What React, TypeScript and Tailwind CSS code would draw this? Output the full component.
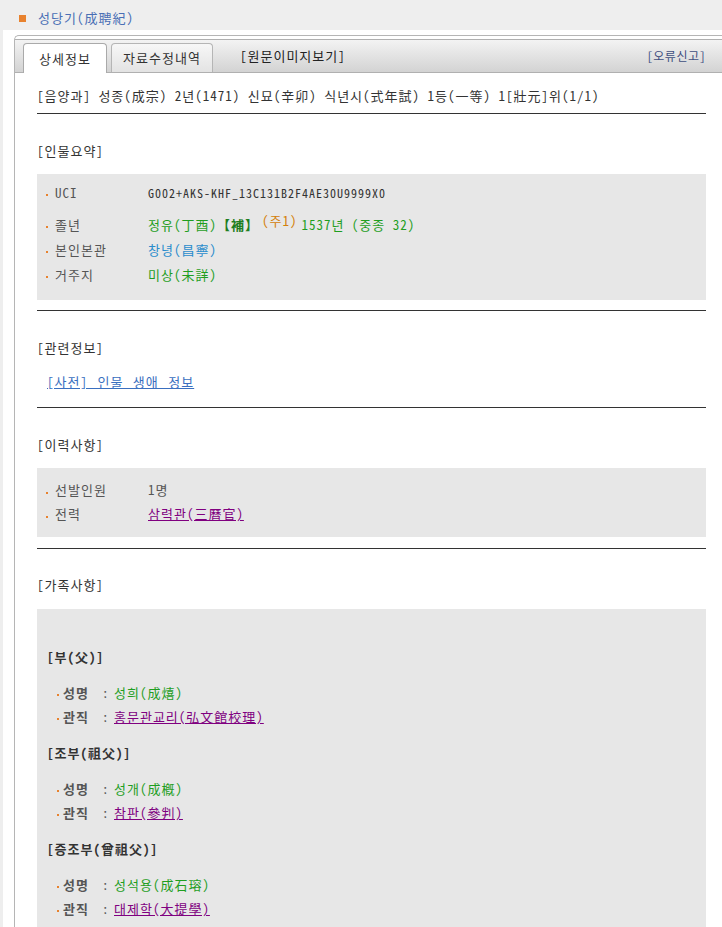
import React from "react";

function Bullet({ className = "" }: { className?: string }) {
  return <span className={"inline-block w-[2px] h-[2px] bg-[#e8822e] shrink-0 " + className} />;
}

function InfoRow({ label, children, tall = false }: { label: string; children: React.ReactNode; tall?: boolean }) {
  return (
    <div className={"flex " + (tall ? "h-[32px] items-end" : "h-[25px] items-center")}>
      <div className="flex items-center h-[25px]">
        <Bullet className="ml-[9px] mr-[7px] mt-[5px]" />
        <span className="w-[93px] text-[#555]">{label}</span>
      </div>
      <div className="h-[25px] flex items-center whitespace-nowrap">{children}</div>
    </div>
  );
}

function FamRow({ label, children }: { label: string; children: React.ReactNode }) {
  return (
    <div className="flex items-center h-[24px]">
      <Bullet className="ml-[20px] mr-[4px] mt-[4px]" />
      <span className="w-[39px] text-[#555] font-bold">{label}</span>
      <span className="w-[12px] text-[#555]">:</span>
      <span className="whitespace-nowrap">{children}</span>
    </div>
  );
}

function FamGroup({ title, name, job }: { title: string; name: string; job: string }) {
  return (
    <div className="mb-[14px]">
      <div className="h-[20px] leading-[20px] pl-[10px] font-bold text-[#333]">{title}</div>
      <div className="mt-[14px]">
        <FamRow label="성명">
          <span className="text-[#1f9e1f]">{name}</span>
        </FamRow>
        <FamRow label="관직">
          <a className="text-[#800080] underline">{job}</a>
        </FamRow>
      </div>
    </div>
  );
}

function Heading({ children, mt = "mt-[27px]" }: { children: React.ReactNode; mt?: string }) {
  return <div className={mt + " h-[20px] leading-[20px] text-[#333]"}>{children}</div>;
}

function Hr({ className = "" }: { className?: string }) {
  return <div className={"h-px bg-[#333] " + className} />;
}

export default function App() {
  return (
    <div className="min-h-[927px] bg-[#eeeeee] font-['Noto_Sans_Mono_CJK_KR','Noto_Sans_CJK_KR',sans-serif] text-[13px] text-[#333] tracking-[1px] overflow-hidden">
      <div className="h-[30px] flex items-center pl-[19px] pt-[6px]">
        <span className="w-[7px] h-[7px] bg-[#e8822e] mr-[12px]" />
        <span className="text-[#4a6fb5]">성당기(成聘紀)</span>
      </div>
      <div className="ml-[3px] bg-white pt-[5px] pl-[11px] min-h-[897px]">
        <div className="border-l border-t border-[#b5b5b5] rounded-tl-[5px] min-h-[892px]">
          <div className="mt-[3px] h-[34px] border-t border-b border-[#b0b0b0] bg-gradient-to-b from-[#f3f3f3] to-[#d3d3d3] flex items-end pl-[8px] pr-[16px]">
            <div className="h-[30px] -mb-px w-[84px] bg-white border border-b-0 border-[#aaaaaa] rounded-t-[4px] flex items-center justify-center text-[#333]">
              상세정보
            </div>
            <div className="h-[29px] ml-[4px] w-[102px] bg-gradient-to-b from-[#f7f7f7] to-[#e3e3e3] border border-b-0 border-[#b5b5b5] rounded-t-[4px] flex items-center justify-center text-[#333]">
              자료수정내역
            </div>
            <div className="self-center ml-[27px] font-medium text-[#222] mb-[1px]">[원문이미지보기]</div>
            <div className="self-center ml-auto text-[12px] tracking-[0.5px] text-[#3f4f80]">[오류신고]</div>
          </div>

          <div className="pl-[22px] pr-[16px]">
            <div className="pt-[13px] h-[33px] leading-[20px] whitespace-nowrap text-[#333]">
              [음양과] 성종(成宗) 2년(1471) 신묘(辛卯) 식년시(式年試) 1등(一等) 1[壯元]위(1/1)
            </div>
            <Hr className="mt-[7px]" />

            <Heading>[인물요약]</Heading>
            <div className="mt-[13px] bg-[#e7e7e7] pt-[6px] pb-[13px]">
              <InfoRow label="UCI">
                <span className="text-[12px] tracking-[1px] text-[#333]">
                  G002+AKS-KHF_13C131B2F4AE30U9999X0
                </span>
              </InfoRow>
              <InfoRow label="졸년" tall>
                <span className="text-[#1f9e1f]">정유(丁酉) </span>
                <span className="text-[#1f7e1f] font-bold">【補】</span>
                <span className="text-[#d4800a] ml-[3px] relative -top-[4px]">(주1)</span>
                <span className="text-[#1f9e1f] ml-[4px]">1537년 (중종 32)</span>
              </InfoRow>
              <InfoRow label="본인본관">
                <span className="text-[#2a8ccc]">창녕(昌寧)</span>
              </InfoRow>
              <InfoRow label="거주지">
                <span className="text-[#1f9e1f]">미상(未詳)</span>
              </InfoRow>
            </div>
            <Hr className="mt-[10px]" />

            <Heading>[관련정보]</Heading>
            <div className="mt-[14px] h-[20px] leading-[20px] pl-[10px]">
              <a className="text-[#3a6fc0] underline [word-spacing:2px]">[사전] 인물 생애 정보</a>
            </div>
            <Hr className="mt-[15px]" />

            <Heading>[이력사항]</Heading>
            <div className="mt-[13px] bg-[#e7e7e7] pt-[10px] pb-[11px]">
              <div className="flex items-center h-[24px]">
                <Bullet className="ml-[9px] mr-[7px] mt-[5px]" />
                <span className="w-[93px] text-[#555]">선발인원</span>
                <span className="text-[#555]">1명</span>
              </div>
              <div className="flex items-center h-[24px]">
                <Bullet className="ml-[9px] mr-[7px] mt-[5px]" />
                <span className="w-[93px] text-[#555]">전력</span>
                <a className="text-[#800080] underline">삼력관(三曆官)</a>
              </div>
            </div>
            <Hr className="mt-[11px]" />

            <Heading mt="mt-[26px]">[가족사항]</Heading>
            <div className="mt-[14px] bg-[#e7e7e7] pt-[38px] min-h-[330px]">
              <FamGroup title="[부(父)]" name="성희(成熺)" job="홍문관교리(弘文館校理)" />
              <FamGroup title="[조부(祖父)]" name="성개(成槪)" job="참판(參判)" />
              <FamGroup title="[증조부(曾祖父)]" name="성석용(成石瑢)" job="대제학(大提學)" />
            </div>
          </div>
        </div>
      </div>
    </div>
  );
}
